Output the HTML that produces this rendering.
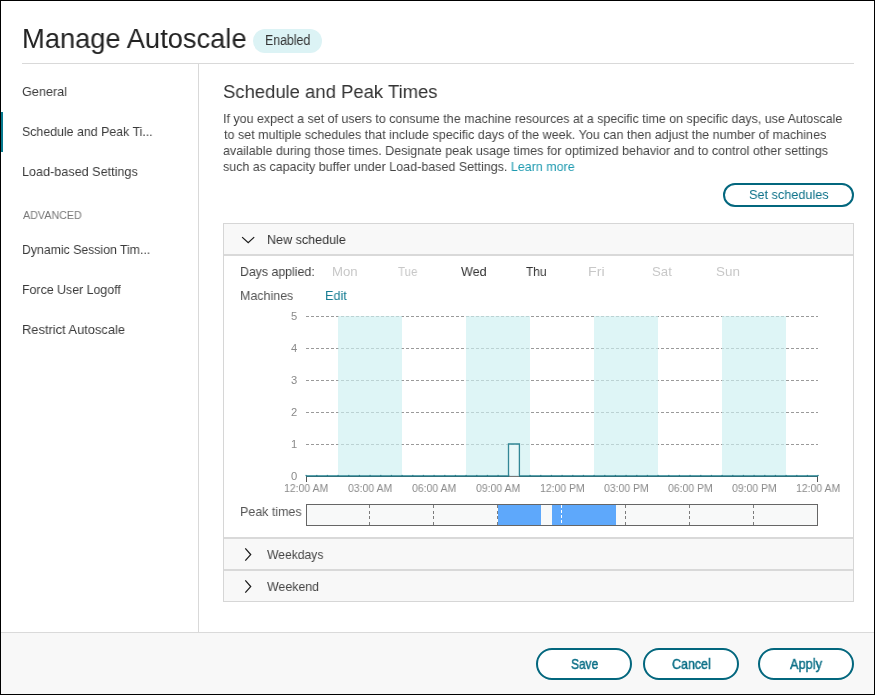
<!DOCTYPE html>
<html><head><meta charset="utf-8">
<style>
html,body{margin:0;padding:0;background:#fff;}
body{width:875px;height:695px;overflow:hidden;position:relative;font-family:"Liberation Sans",sans-serif;color:#333;}
.frame{position:absolute;left:0;top:0;width:875px;height:695px;box-sizing:border-box;border:1px solid #000;}
.t{position:absolute;white-space:nowrap;line-height:1;will-change:transform;transform-origin:0 0;}
.hl{position:absolute;background:#d9d9d9;}
.side{font-size:13px;letter-spacing:-0.3px;color:#3b3b3b;}
.para{font-size:13px;letter-spacing:-0.25px;color:#454545;left:223px;}
.btn{position:absolute;box-sizing:border-box;border:2px solid #03677e;border-radius:16px;background:#fff;}
.panelhdr{position:absolute;left:224px;width:629px;background:#f8f8f8;}
.day{font-size:12.5px;color:#c9c9c9;letter-spacing:-0.1px;}
.ax{font-size:11px;color:#8a8a8a;}
.xl{font-size:11px;color:#8a8a8a;letter-spacing:-0.55px;text-align:center;width:60px;}
.yl{font-size:11px;color:#8a8a8a;text-align:right;width:20px;left:277px;}
.bt{top:657px;width:96px;text-align:center;font-size:14px;font-weight:bold;color:#0b6f87;}
.bt span{display:inline-block;transform:scaleX(0.86);}
</style></head><body>

<!-- Title -->
<div style="position:absolute;left:253px;top:29px;width:69px;height:24px;border-radius:12px;background:#dcf3f5;"></div>

<div class="hl" style="left:22px;top:63px;width:832px;height:1px;"></div>
<div class="hl" style="left:198px;top:63px;width:1px;height:569px;"></div>

<!-- Sidebar -->
<div style="position:absolute;left:1px;top:112px;width:2px;height:40px;background:#05798e;"></div>

<!-- Main heading -->

<!-- Set schedules -->
<div class="btn" style="left:723px;top:183px;width:131px;height:24px;border-radius:12px;"></div>

<!-- Accordion panel -->
<div style="position:absolute;left:223px;top:223px;width:631px;height:379px;box-sizing:border-box;border:1px solid #d6d6d6;background:#fff;"></div>
<div class="panelhdr" style="top:224px;height:30px;"></div>
<div class="hl" style="left:224px;top:254px;width:629px;height:2px;"></div>
<svg style="position:absolute;left:240px;top:235px" width="17" height="11"><path d="M2.1 2.1 L8.2 7.6 L14.2 2.1" fill="none" stroke="#1a1a1a" stroke-width="1.25"/></svg>



<!-- Chart -->
<svg style="position:absolute;left:0;top:0" width="875" height="695">
  <g stroke="#9a9a9a" stroke-width="1" stroke-dasharray="3 2" shape-rendering="crispEdges">
    <line x1="306" y1="316.5" x2="818" y2="316.5"/>
    <line x1="306" y1="348.5" x2="818" y2="348.5"/>
    <line x1="306" y1="380.5" x2="818" y2="380.5"/>
    <line x1="306" y1="412.5" x2="818" y2="412.5"/>
    <line x1="306" y1="444.5" x2="818" y2="444.5"/>
  </g>
  <g fill="#ccf0f1" fill-opacity="0.65">
    <rect x="338" y="316" width="64" height="159"/>
    <rect x="466" y="316" width="64" height="159"/>
    <rect x="594" y="316" width="64" height="159"/>
    <rect x="722" y="316" width="64" height="159"/>
  </g>
  <!-- spike -->
  <rect x="508.5" y="444" width="11" height="32" fill="#ffffff" fill-opacity="0.35"/>
  <path d="M508.5 476 L508.5 444 L519.4 444 L519.4 476" fill="none" stroke="#1f7b8c" stroke-opacity="0.9" stroke-width="1.3"/>
  <g shape-rendering="crispEdges">
  <rect x="306" y="475" width="512" height="1" fill="#5aa2ad"/>
  <rect x="306" y="476" width="512" height="1" fill="#2f717c"/>
  <rect x="509" y="476" width="10" height="1" fill="#777"/>
  <rect x="509" y="475" width="10" height="1" fill="#cfe8ec"/>
  </g>
  <rect x="305.50" y="474.9" width="1.2" height="1.2" fill="#2a7f8c"/><rect x="316.17" y="474.9" width="1.2" height="1.2" fill="#2a7f8c"/><rect x="326.83" y="474.9" width="1.2" height="1.2" fill="#2a7f8c"/><rect x="337.50" y="474.9" width="1.2" height="1.2" fill="#2a7f8c"/><rect x="348.17" y="474.9" width="1.2" height="1.2" fill="#2a7f8c"/><rect x="358.83" y="474.9" width="1.2" height="1.2" fill="#2a7f8c"/><rect x="369.50" y="474.9" width="1.2" height="1.2" fill="#2a7f8c"/><rect x="380.17" y="474.9" width="1.2" height="1.2" fill="#2a7f8c"/><rect x="390.83" y="474.9" width="1.2" height="1.2" fill="#2a7f8c"/><rect x="401.50" y="474.9" width="1.2" height="1.2" fill="#2a7f8c"/><rect x="412.17" y="474.9" width="1.2" height="1.2" fill="#2a7f8c"/><rect x="422.83" y="474.9" width="1.2" height="1.2" fill="#2a7f8c"/><rect x="433.50" y="474.9" width="1.2" height="1.2" fill="#2a7f8c"/><rect x="444.17" y="474.9" width="1.2" height="1.2" fill="#2a7f8c"/><rect x="454.83" y="474.9" width="1.2" height="1.2" fill="#2a7f8c"/><rect x="465.50" y="474.9" width="1.2" height="1.2" fill="#2a7f8c"/><rect x="476.17" y="474.9" width="1.2" height="1.2" fill="#2a7f8c"/><rect x="486.83" y="474.9" width="1.2" height="1.2" fill="#2a7f8c"/><rect x="497.50" y="474.9" width="1.2" height="1.2" fill="#2a7f8c"/><rect x="508.17" y="474.9" width="1.2" height="1.2" fill="#2a7f8c"/><rect x="518.83" y="474.9" width="1.2" height="1.2" fill="#2a7f8c"/><rect x="529.50" y="474.9" width="1.2" height="1.2" fill="#2a7f8c"/><rect x="540.17" y="474.9" width="1.2" height="1.2" fill="#2a7f8c"/><rect x="550.83" y="474.9" width="1.2" height="1.2" fill="#2a7f8c"/><rect x="561.50" y="474.9" width="1.2" height="1.2" fill="#2a7f8c"/><rect x="572.17" y="474.9" width="1.2" height="1.2" fill="#2a7f8c"/><rect x="582.83" y="474.9" width="1.2" height="1.2" fill="#2a7f8c"/><rect x="593.50" y="474.9" width="1.2" height="1.2" fill="#2a7f8c"/><rect x="604.17" y="474.9" width="1.2" height="1.2" fill="#2a7f8c"/><rect x="614.83" y="474.9" width="1.2" height="1.2" fill="#2a7f8c"/><rect x="625.50" y="474.9" width="1.2" height="1.2" fill="#2a7f8c"/><rect x="636.17" y="474.9" width="1.2" height="1.2" fill="#2a7f8c"/><rect x="646.83" y="474.9" width="1.2" height="1.2" fill="#2a7f8c"/><rect x="657.50" y="474.9" width="1.2" height="1.2" fill="#2a7f8c"/><rect x="668.17" y="474.9" width="1.2" height="1.2" fill="#2a7f8c"/><rect x="678.83" y="474.9" width="1.2" height="1.2" fill="#2a7f8c"/><rect x="689.50" y="474.9" width="1.2" height="1.2" fill="#2a7f8c"/><rect x="700.17" y="474.9" width="1.2" height="1.2" fill="#2a7f8c"/><rect x="710.83" y="474.9" width="1.2" height="1.2" fill="#2a7f8c"/><rect x="721.50" y="474.9" width="1.2" height="1.2" fill="#2a7f8c"/><rect x="732.17" y="474.9" width="1.2" height="1.2" fill="#2a7f8c"/><rect x="742.83" y="474.9" width="1.2" height="1.2" fill="#2a7f8c"/><rect x="753.50" y="474.9" width="1.2" height="1.2" fill="#2a7f8c"/><rect x="764.17" y="474.9" width="1.2" height="1.2" fill="#2a7f8c"/><rect x="774.83" y="474.9" width="1.2" height="1.2" fill="#2a7f8c"/><rect x="785.50" y="474.9" width="1.2" height="1.2" fill="#2a7f8c"/><rect x="796.17" y="474.9" width="1.2" height="1.2" fill="#2a7f8c"/><rect x="806.83" y="474.9" width="1.2" height="1.2" fill="#2a7f8c"/><rect x="817.50" y="474.9" width="1.2" height="1.2" fill="#2a7f8c"/>
  <g stroke="#555" stroke-width="1" shape-rendering="crispEdges">
    <line x1="306.5" y1="477" x2="306.5" y2="482"/>
    <line x1="817.5" y1="477" x2="817.5" y2="482"/>
  </g>
  <!-- peak bar -->
  <rect x="306.5" y="504.5" width="511" height="21" fill="#f8f9f9" stroke="#666" stroke-width="1"/>
  <rect x="498" y="505" width="43" height="20" fill="#5ea8fb"/>
  <rect x="552" y="505" width="64" height="20" fill="#5ea8fb"/>
  <g stroke="#7c7c7c" stroke-width="1" stroke-dasharray="3 2.6" shape-rendering="crispEdges">
    <line x1="369.5" y1="505" x2="369.5" y2="525"/>
    <line x1="433.5" y1="505" x2="433.5" y2="525"/>
    <line x1="497.5" y1="505" x2="497.5" y2="525"/>
    <line x1="625.5" y1="505" x2="625.5" y2="525"/>
    <line x1="689.5" y1="505" x2="689.5" y2="525"/>
    <line x1="753.5" y1="505" x2="753.5" y2="525"/>
  </g>
  <line x1="561.5" y1="505" x2="561.5" y2="525" stroke="#fff" stroke-width="1" stroke-dasharray="3 2" shape-rendering="crispEdges"/>
</svg>



<!-- Weekdays / Weekend -->
<div class="hl" style="left:224px;top:537px;width:629px;height:2px;"></div>
<div class="panelhdr" style="top:539px;height:30px;"></div>
<div class="hl" style="left:224px;top:569px;width:629px;height:2px;"></div>
<div class="panelhdr" style="top:571px;height:30px;"></div>
<svg style="position:absolute;left:242px;top:547px" width="12" height="16"><path d="M3.3 1.4 L8.7 7.6 L3.3 13.7" fill="none" stroke="#1a1a1a" stroke-width="1.25"/></svg>
<svg style="position:absolute;left:242px;top:579px" width="12" height="16"><path d="M3.3 1.4 L8.7 7.6 L3.3 13.7" fill="none" stroke="#1a1a1a" stroke-width="1.25"/></svg>

<!-- Footer -->
<div style="position:absolute;left:1px;top:632px;width:873px;height:62px;background:#f8f8f8;border-top:1px solid #dadada;"></div>
<div class="btn" style="left:536px;top:648px;width:96px;height:32px;"></div>
<div class="btn" style="left:643px;top:648px;width:96px;height:32px;"></div>
<div class="btn" style="left:758px;top:648px;width:96px;height:32px;"></div>

<div class="t" style="left:21.81px;top:25px;font-size:27.5px;transform:scaleX(0.9928);color:#222;">Manage Autoscale</div>
<div class="t" style="left:264.71px;top:34px;font-size:13.8px;transform:scaleX(0.8939);color:#333;">Enabled</div>
<div class="t" style="left:21.57px;top:85px;font-size:13.6px;transform:scaleX(0.9304);color:#3b3b3b;">General</div>
<div class="t" style="left:21.59px;top:125px;font-size:13.6px;transform:scaleX(0.9099);color:#3b3b3b;">Schedule and Peak Ti...</div>
<div class="t" style="left:21.57px;top:165px;font-size:13.6px;transform:scaleX(0.9285);color:#3b3b3b;">Load-based Settings</div>
<div class="t" style="left:22.80px;top:210px;font-size:11.2px;transform:scaleX(0.9574);color:#777;">ADVANCED</div>
<div class="t" style="left:21.70px;top:243px;font-size:13.6px;transform:scaleX(0.9029);color:#3b3b3b;">Dynamic Session Tim...</div>
<div class="t" style="left:21.79px;top:283px;font-size:13.6px;transform:scaleX(0.9102);color:#3b3b3b;">Force User Logoff</div>
<div class="t" style="left:21.75px;top:323px;font-size:13.6px;transform:scaleX(0.9467);color:#3b3b3b;">Restrict Autoscale</div>
<div class="t" style="left:223.04px;top:82px;font-size:19.2px;transform:scaleX(0.9620);color:#333;">Schedule and Peak Times</div>
<div class="t" style="left:223.28px;top:112px;font-size:13.5px;transform:scaleX(0.9233);color:#454545;">If you expect a set of users to consume the machine resources at a specific time on specific days, use Autoscale</div>
<div class="t" style="left:223.80px;top:128px;font-size:13.5px;transform:scaleX(0.9289);color:#454545;">to set multiple schedules that include specific days of the week. You can then adjust the number of machines</div>
<div class="t" style="left:222.87px;top:144px;font-size:13.5px;transform:scaleX(0.9280);color:#454545;">available during those times. Designate peak usage times for optimized behavior and to control other settings</div>
<div class="t" style="left:222.88px;top:160px;font-size:13.5px;transform:scaleX(0.9248);color:#454545;">such as capacity buffer under Load-based Settings. <span style="color:#1e9ab0">Learn more</span></div>
<div class="t" style="left:748.86px;top:188px;font-size:13.5px;transform:scaleX(0.9398);color:#0c7189;">Set schedules</div>
<div class="t" style="left:266.68px;top:233px;font-size:13.6px;transform:scaleX(0.9238);color:#333;">New schedule</div>
<div class="t" style="left:239.88px;top:265px;font-size:13.4px;transform:scaleX(0.9203);color:#444;">Days applied:</div>
<div class="t" style="left:332.21px;top:265px;font-size:13.2px;transform:scaleX(0.9917);color:#c8c8c8;">Mon</div>
<div class="t" style="left:397.60px;top:265px;font-size:13.2px;transform:scaleX(0.8727);color:#c8c8c8;">Tue</div>
<div class="t" style="left:461.20px;top:265px;font-size:13.2px;transform:scaleX(0.9538);color:#333;">Wed</div>
<div class="t" style="left:525.70px;top:265px;font-size:13.2px;transform:scaleX(0.9000);color:#333;">Thu</div>
<div class="t" style="left:587.72px;top:265px;font-size:13.2px;transform:scaleX(1.0786);color:#c8c8c8;">Fri</div>
<div class="t" style="left:652.32px;top:265px;font-size:13.2px;transform:scaleX(0.9789);color:#c8c8c8;">Sat</div>
<div class="t" style="left:716.18px;top:265px;font-size:13.2px;transform:scaleX(1.0182);color:#c8c8c8;">Sun</div>
<div class="t" style="left:239.87px;top:289px;font-size:13.4px;transform:scaleX(0.9304);color:#555;">Machines</div>
<div class="t" style="left:325.05px;top:289px;font-size:13.4px;transform:scaleX(0.9455);color:#167d93;">Edit</div>
<div class="t" style="left:239.67px;top:505px;font-size:13.4px;transform:scaleX(0.9308);color:#555;">Peak times</div>
<div class="t" style="left:267.40px;top:548px;font-size:13.6px;transform:scaleX(0.8921);color:#444;">Weekdays</div>
<div class="t" style="left:267.40px;top:580px;font-size:13.6px;transform:scaleX(0.9107);color:#444;">Weekend</div>
<div class="t" style="left:570.90px;top:657px;font-size:14.2px;transform:scaleX(0.8406);color:#0b6f87;-webkit-text-stroke:0.45px #0b6f87;">Save</div>
<div class="t" style="left:671.70px;top:657px;font-size:14.2px;transform:scaleX(0.8773);color:#0b6f87;-webkit-text-stroke:0.45px #0b6f87;">Cancel</div>
<div class="t" style="left:789.90px;top:657px;font-size:14.2px;transform:scaleX(0.9000);color:#0b6f87;-webkit-text-stroke:0.45px #0b6f87;">Apply</div>
<div class="t" style="left:290.70px;top:311px;font-size:11.2px;color:#8a8a8a;">5</div>
<div class="t" style="left:290.70px;top:343px;font-size:11.2px;color:#8a8a8a;">4</div>
<div class="t" style="left:290.70px;top:375px;font-size:11.2px;color:#8a8a8a;">3</div>
<div class="t" style="left:290.70px;top:407px;font-size:11.2px;color:#8a8a8a;">2</div>
<div class="t" style="left:290.70px;top:439px;font-size:11.2px;color:#8a8a8a;">1</div>
<div class="t" style="left:290.70px;top:471px;font-size:11.2px;color:#8a8a8a;">0</div>
<div class="t" style="left:283.86px;top:483px;font-size:11.2px;transform:scaleX(0.9350);color:#8a8a8a;">12:00 AM</div>
<div class="t" style="left:348.33px;top:483px;font-size:11.2px;transform:scaleX(0.9350);color:#8a8a8a;">03:00 AM</div>
<div class="t" style="left:412.33px;top:483px;font-size:11.2px;transform:scaleX(0.9350);color:#8a8a8a;">06:00 AM</div>
<div class="t" style="left:476.33px;top:483px;font-size:11.2px;transform:scaleX(0.9350);color:#8a8a8a;">09:00 AM</div>
<div class="t" style="left:539.86px;top:483px;font-size:11.2px;transform:scaleX(0.9350);color:#8a8a8a;">12:00 PM</div>
<div class="t" style="left:604.33px;top:483px;font-size:11.2px;transform:scaleX(0.9350);color:#8a8a8a;">03:00 PM</div>
<div class="t" style="left:668.33px;top:483px;font-size:11.2px;transform:scaleX(0.9350);color:#8a8a8a;">06:00 PM</div>
<div class="t" style="left:732.33px;top:483px;font-size:11.2px;transform:scaleX(0.9350);color:#8a8a8a;">09:00 PM</div>
<div class="t" style="left:795.86px;top:483px;font-size:11.2px;transform:scaleX(0.9350);color:#8a8a8a;">12:00 AM</div>
<div class="frame"></div>
</body></html>
